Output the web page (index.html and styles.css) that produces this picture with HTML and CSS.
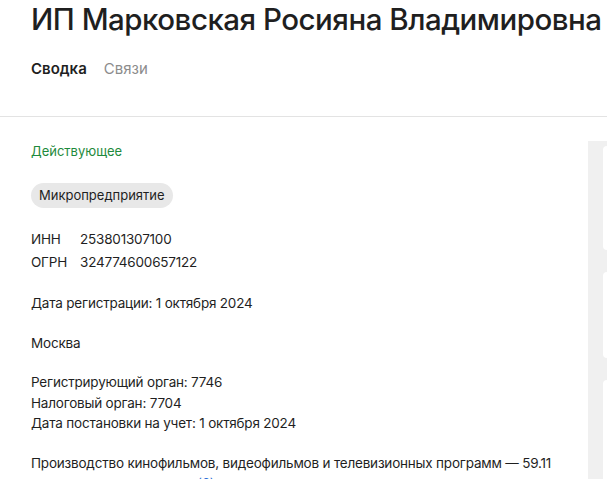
FILE: index.html
```html
<!DOCTYPE html>
<html lang="ru">
<head>
    <meta charset="UTF-8">
    <meta name="viewport" content="width=device-width, initial-scale=1.0">
    <title>ИП Марковская Росияна Владимировна</title>
    <link rel="stylesheet" href="styles.css">
</head>
<body>
    <header class="page-header">
        <h1 class="title">ИП Марковская Росияна Владимировна</h1>
        <nav class="tabs">
            <a class="tab active" href="#">Сводка</a>
            <a class="tab" href="#">Связи</a>
        </nav>
    </header>

    <main class="layout">
        <section class="summary">
            <div class="status">Действующее</div>
            <div class="badges">
                <span class="badge">Микропредприятие</span>
            </div>
            <table class="ids">
                <tr><td class="id-label">ИНН</td><td>253801307100</td></tr>
                <tr><td class="id-label">ОГРН</td><td>324774600657122</td></tr>
            </table>
            <p class="block">Дата регистрации: 1 октября 2024</p>
            <p class="block">Москва</p>
            <div class="block">
                <div>Регистрирующий орган: 7746</div>
                <div>Налоговый орган: 7704</div>
                <div>Дата постановки на учет: 1 октября 2024</div>
            </div>
            <div class="block">
                <div class="nowrap">Производство кинофильмов, видеофильмов и телевизионных программ — 59.11</div>
                <a class="more" href="#">иные виды деятельности (6)</a>
            </div>
        </section>

        <aside class="side">
            <div class="card card-1"></div>
            <div class="card card-2"></div>
            <div class="card card-3"></div>
        </aside>
    </main>
</body>
</html>
```

FILE: styles.css
```css
body { margin: 0; font-family: Inter, "Noto Sans", sans-serif; color: #1f1f1f; background: #fff; overflow: hidden; }

.page-header { padding: 0 0 0 31px; border-bottom: 1px solid #e3e3e3; height: 117px; box-sizing: border-box; }
.title { margin: 0; padding-top: 1px; font-size: 29.5px; font-weight: 500; line-height: 36px; white-space: nowrap; letter-spacing: -0.5px; }
.tabs { display: flex; gap: 17px; margin-top: 20px; }
.tab { font-size: 15px; line-height: 24px; color: #8c8c8c; text-decoration: none; }
.tab.active { color: #1f1f1f; font-weight: 600; }

.layout { display: grid; grid-template-columns: 1fr 19px; column-gap: 26px; padding-left: 31px; }

.summary { padding-top: 24px; font-size: 13.5px; line-height: 20.5px; letter-spacing: -0.2px; min-width: 0; }
.status { color: #1e8a3c; font-size: 13px; line-height: 20px; letter-spacing: 0; }
.badges { margin-top: 22px; }
.badge { display: inline-block; background: #e8e8e8; border-radius: 13px; padding: 2px 8px; font-size: 13px; line-height: 21px; letter-spacing: 0; }
.ids { border-collapse: collapse; margin-top: 20px; }
.ids td { padding: 0; line-height: 23px; }
.id-label { width: 49px; }
.block { margin: 19px 0 0; }
.nowrap { white-space: nowrap; }
.more { color: #2b6fd6; text-decoration: none; }

.side { margin-top: 24px; background: #f0f0f0; padding: 5px 0 0 15px; display: flex; flex-direction: column; gap: 22px; height: 400px; }
.card { background: #fff; border-radius: 8px 0 0 8px; }
.card-1 { height: 104px; }
.card-2 { height: 86px; }
.card-3 { height: 120px; }
```
